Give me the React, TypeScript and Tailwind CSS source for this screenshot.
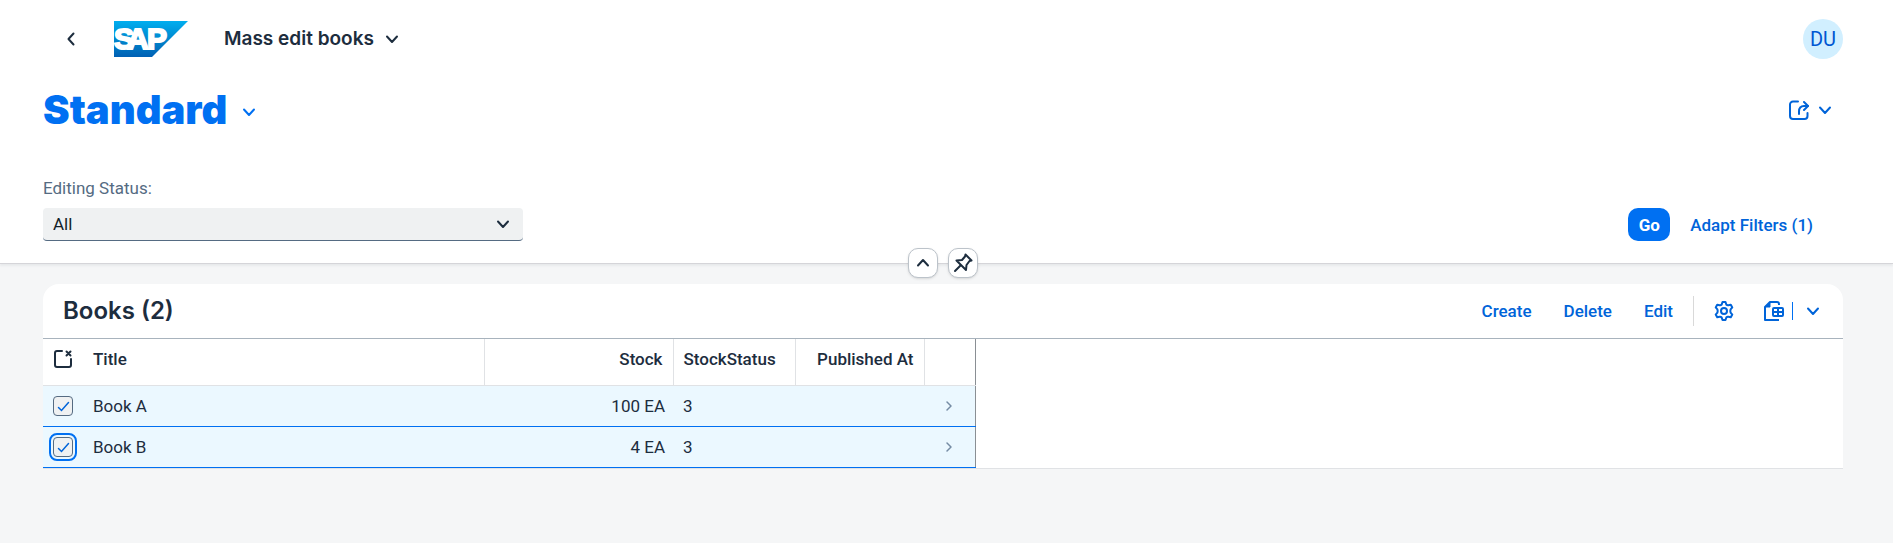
import { useState } from "react";

const books = [
  { title: "Book A", stock: "100 EA", status: "3", publishedAt: "" },
  { title: "Book B", stock: "4 EA", status: "3", publishedAt: "" }
];

const chevrons = {
  down: "M3 5.500l5 5.500 5-5.500",
  up: "M3 10.500l5-5.500 5 5.500",
  left: "M9.500 2.500L4.500 8l5 5.500",
  right: "M6 4l4 4-4 4"
};

type ChevronProps = { dir: keyof typeof chevrons; className?: string };

const Chevron = ({ dir, className = "size-4" }: ChevronProps) => (
  <svg viewBox="0 0 16 16" className={className} fill="none" stroke="currentColor" strokeWidth="2" strokeLinecap="round" strokeLinejoin="round" aria-hidden="true">
    <path d={chevrons[dir]} />
  </svg>
);

const SapLogo = () => (
  <svg viewBox="0 0 74 36" className="h-9 w-[74px]" role="img" aria-label="SAP">
    <defs>
      <linearGradient id="sap" x1="0" y1="0" x2="0" y2="1">
        <stop offset="0" stopColor="#00aeef" />
        <stop offset="0.5" stopColor="#0088cf" />
        <stop offset="1" stopColor="#0060b4" />
      </linearGradient>
    </defs>
    <path d="M0 0h74L38 36H0z" fill="url(#sap)" />
    <text x="0 13 33" y="28" fill="#fff" stroke="#fff" strokeWidth="2" fontFamily="Liberation Sans, sans-serif" fontWeight="700" fontSize="30">SAP</text>
  </svg>
);

const ShareIcon = () => (
  <svg viewBox="0 0 20 20" className="size-5" fill="none" stroke="currentColor" strokeWidth="2" strokeLinecap="round" strokeLinejoin="round" aria-hidden="true">
    <path d="M9 1.500H4a3 3 0 0 0-3 3V16a3 3 0 0 0 3 3h11.500a3 3 0 0 0 3-3v-3" />
    <path d="M10 14v-2.500c0-3.500 2-5.500 5-5.500h4" />
    <path d="M15 2l4 4-4 4" />
  </svg>
);

const PinIcon = () => (
  <svg viewBox="0 0 20 20" className="size-5" fill="none" stroke="currentColor" strokeWidth="2" strokeLinecap="round" strokeLinejoin="round" aria-hidden="true">
    <path d="M12.500 1.500l6 6-2 .5-3 4-.5 5L3.500 7.500l5.500-.5 3-3.500z" />
    <path d="M7.500 12.500L2 18" />
  </svg>
);

const GearIcon = () => (
  <svg viewBox="0 0 20 20" className="size-5" fill="none" stroke="currentColor" strokeWidth="2" strokeLinejoin="round" aria-hidden="true">
    <path d="M8.500 1h3l.8 2.500q.8.900 2 .7l2.500-.5 1.500 2.700-1.700 2q-.6 1.600 0 3.200l1.700 2-1.500 2.700-2.500-.5q-1.200-.2-2 .7L11.500 19h-3l-.8-2.500q-.8-.9-2-.7l-2.500.5-1.500-2.700 1.700-2q.6-1.600 0-3.200l-1.700-2 1.500-2.700 2.500.5q1.200.2 2-.7z" />
    <circle cx="10" cy="10" r="3" />
  </svg>
);

const ExportIcon = () => (
  <svg viewBox="0 0 20 20" className="size-5" fill="none" stroke="currentColor" strokeWidth="2" strokeLinejoin="round" aria-hidden="true">
    <path d="M15 4V3a2 2 0 0 0-2-2H6L1 6v13h14" />
    <path d="M6 1v5H1z" fill="currentColor" strokeWidth="1" />
    <rect x="9" y="7" width="10" height="8" rx="1" />
    <path d="M9 11h10M14 7v8" />
  </svg>
);

const DeselectIcon = () => (
  <svg viewBox="0 0 20 20" className="size-5" fill="none" stroke="currentColor" strokeWidth="2" strokeLinecap="round" aria-hidden="true">
    <path d="M9 2H4a2 2 0 0 0-2 2v12a2 2 0 0 0 2 2h12a2 2 0 0 0 2-2v-6" />
    <path d="M13.500 2.500l4 4M17.500 2.500l-4 4" />
  </svg>
);

const App = () => {
  const [selected, setSelected] = useState([true, true]);

  const toggle = (index: number) =>
    setSelected(selected.map((value, i) => (i === index ? !value : value)));

  return (
    <div className="flex min-h-screen flex-col bg-[#f5f6f7] font-['Roboto',sans-serif] text-[17px] leading-5 text-[#1d2d3e]">
      {/* Shell bar */}
      <header className="flex h-[78px] items-center bg-white pr-[50px] pl-[62px]">
        <button type="button" aria-label="Back" className="p-0.5">
          <Chevron dir="left" />
        </button>
        <a href="#home" className="ml-8">
          <SapLogo />
        </a>
        <button type="button" className="ml-9 flex items-center gap-2.5 font-['Inter',sans-serif] text-[19px] font-semibold">
          Mass edit books
          <Chevron dir="down" />
        </button>
        <button type="button" aria-label="Profile" className="ml-auto size-10 rounded-full bg-[#d1efff] text-xl text-[#0057d2]">
          DU
        </button>
      </header>

      {/* Page header with filters */}
      <section className="relative border-b border-[#d5d5d9] bg-white pr-[50px] pl-[43px] shadow-[0_2px_2px_rgba(34,53,72,0.06)]">
        <div className="flex h-[70px] items-start justify-between pt-2.5 pr-2.5">
          <button type="button" className="flex items-center gap-3.5 text-[40px] leading-11 text-[#0070f2]">
            <h1 className="font-['Inter',sans-serif] font-black">Standard</h1>
            <Chevron dir="down" className="mt-1 size-4" />
          </button>
          <button type="button" aria-label="Share" className="flex h-11 items-center gap-2 text-[#0064d9]">
            <ShareIcon />
            <Chevron dir="down" />
          </button>
        </div>
        <div className="flex items-end justify-between pt-7 pr-[30px] pb-[22px]">
          <div className="flex w-[480px] flex-col gap-2.5">
            <label htmlFor="status" className="pt-0.5 text-[#556b82]">Editing Status:</label>
            <div className="relative">
              <select id="status" className="h-[33px] w-full appearance-none rounded border-b border-[#556b82] bg-[#eff1f2] px-2.5 text-[#131e29]">
                <option>All</option>
              </select>
              <Chevron dir="down" className="pointer-events-none absolute top-2 right-3 size-4" />
            </div>
          </div>
          <div className="flex items-center gap-5">
            <button type="button" className="h-[33px] w-[42px] rounded-[10px] bg-[#0070f2] font-bold text-white">Go</button>
            <button type="button" className="font-medium text-[#0064d9]">Adapt Filters (1)</button>
          </div>
        </div>
        <div className="absolute right-[50px] -bottom-[15px] left-[43px] flex justify-center gap-2.5">
          <button type="button" aria-label="Collapse header" className="flex size-[30px] items-center justify-center rounded-[10px] border border-[#bcc3ca] bg-white shadow">
            <Chevron dir="up" />
          </button>
          <button type="button" aria-label="Pin header" className="flex size-[30px] items-center justify-center rounded-[10px] border border-[#bcc3ca] bg-white shadow">
            <PinIcon />
          </button>
        </div>
      </section>

      {/* Books table */}
      <main className="mt-5 mr-[50px] ml-[43px] overflow-hidden rounded-t-2xl border-b border-[#e0e2e5] bg-white">
        <div className="flex h-[55px] items-center border-b border-[#a8b3bd] pr-[22px] pl-5">
          <h2 className="font-['Inter',sans-serif] text-2xl font-semibold">Books (2)</h2>
          <div className="ml-auto flex items-center text-[#0064d9]">
            <div className="flex gap-8 font-medium">
              <button type="button">Create</button>
              <button type="button">Delete</button>
              <button type="button">Edit</button>
            </div>
            <span className="mx-5 h-[30px] w-px bg-[#d9d9d9]"></span>
            <button type="button" aria-label="Settings">
              <GearIcon />
            </button>
            <button type="button" aria-label="Export" className="ml-[30px]">
              <ExportIcon />
            </button>
            <span className="mr-3 ml-2 h-[18px] w-px bg-[#0070f2]"></span>
            <button type="button" aria-label="Export options">
              <Chevron dir="down" />
            </button>
          </div>
        </div>
        <table className="w-[932px] table-fixed border-r border-[#8a8f94] text-left">
          <colgroup>
            <col className="w-10" />
            <col className="w-[401px]" />
            <col className="w-[189px]" />
            <col className="w-[122px]" />
            <col className="w-[129px]" />
            <col className="w-[51px]" />
          </colgroup>
          <thead>
            <tr className="h-[46px] border-b border-[#e0e2e5]">
              <th className="pb-1.5 pl-2.5">
                <button type="button" aria-label="Deselect all" className="block">
                  <DeselectIcon />
                </button>
              </th>
              <th className="border-r border-[#e0e2e5] px-2.5 pb-1.5 font-medium">Title</th>
              <th className="border-r border-[#e0e2e5] px-2.5 pb-1.5 text-right font-medium">Stock</th>
              <th className="border-r border-[#e0e2e5] px-2.5 pb-1.5 font-medium">StockStatus</th>
              <th className="border-r border-[#e0e2e5] px-2.5 pb-1.5 text-right font-medium">Published At</th>
              <th></th>
            </tr>
          </thead>
          <tbody>
            {books.map((book, index) => (
              <tr key={book.title} className="h-[41px] border-b border-[#0070f2] bg-[#ebf8ff]">
                <td className="pl-2.5">
                  <div className="relative size-5">
                    <input
                      type="checkbox"
                      aria-label={`Select ${book.title}`}
                      checked={selected[index]}
                      onChange={() => toggle(index)}
                      className="peer block size-5 appearance-none rounded border border-[#556b82] bg-[#eff1f2] outline-[#0070f2] focus:outline-2 focus:outline-offset-2"
                      autoFocus={index === books.length - 1}
                    />
                    <svg viewBox="0 0 20 20" className="pointer-events-none absolute inset-0 hidden size-5 text-[#0064d9] peer-checked:block" fill="none" stroke="currentColor" strokeWidth="1.500" strokeLinecap="round" aria-hidden="true">
                      <path d="M5.500 11.500l3 3 7-8" />
                    </svg>
                  </div>
                </td>
                <td className="px-2.5">{book.title}</td>
                <td className="pr-2 text-right">{book.stock}</td>
                <td className="px-2.5">{book.status}</td>
                <td className="pr-2 text-right">{book.publishedAt}</td>
                <td className="text-[#758ca4]">
                  <Chevron dir="right" className="mx-auto size-4 stroke-[1.5]" />
                </td>
              </tr>
            ))}
          </tbody>
        </table>
      </main>
    </div>
  );
};

export default App;
